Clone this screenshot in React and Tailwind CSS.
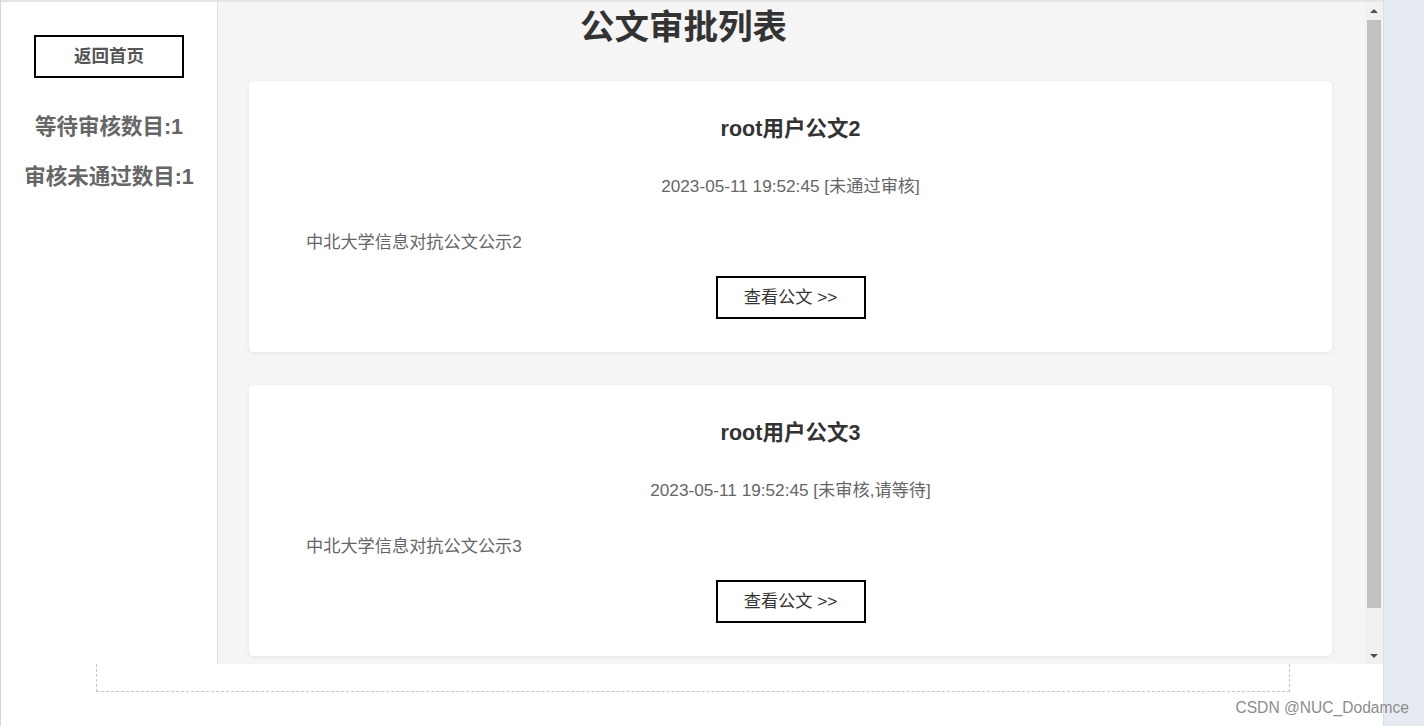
const font = { fontFamily: '"Liberation Sans", "Noto Sans CJK SC", Arial, sans-serif' };

const docs = [
  { title: 'root用户公文2', time: '2023-05-11 19:52:45', status: '[未通过审核]', desc: '中北大学信息对抗公文公示2' },
  { title: 'root用户公文3', time: '2023-05-11 19:52:45', status: '[未审核,请等待]', desc: '中北大学信息对抗公文公示3' },
];

function DocCard({ doc }) {
  return (
    <div className="w-[1083px] ml-[31px] bg-white rounded-[5px] shadow-[0_1px_4px_rgba(0,0,0,0.07)] flex flex-col items-center pt-[34px] pb-[33px]">
      <div className="text-[21.5px] leading-[28px] font-bold text-[#333]">{doc.title}</div>
      <div className="mt-[31px] text-[17.2px] leading-[24px] text-[#666]">
        {doc.time} {doc.status}
      </div>
      <div className="mt-[32px] self-start pl-[57px] text-[17.2px] leading-[24px] text-[#666]">{doc.desc}</div>
      <button className="mt-[22px] w-[150px] h-[43px] border-2 border-black bg-white text-[17.2px] text-[#333]">
        查看公文 &gt;&gt;
      </button>
    </div>
  );
}

export default function App() {
  return (
    <div style={font} className="relative w-[1424px] h-[726px] bg-white flex overflow-hidden">
      <div className="w-[1383px] h-full flex flex-col border-l border-[#d4d6da]">
        <div className="h-[664px] flex border-t-2 border-[#e4e4e4]">
          {/* sidebar */}
          <div className="w-[217px] shrink-0 bg-white border-r border-[#e2e2e2] flex flex-col items-center">
            <button className="mt-[33px] w-[150px] h-[43px] border-2 border-black bg-white text-[17.5px] font-bold text-[#555]">
              返回首页
            </button>
            <div className="mt-[35px] text-[21.5px] leading-[28px] font-bold text-[#666]">等待审核数目:1</div>
            <div className="mt-[22px] text-[21.5px] leading-[28px] font-bold text-[#666]">审核未通过数目:1</div>
          </div>

          {/* main */}
          <div className="flex-1 bg-[#f5f5f5] overflow-hidden">
            <div className="flex flex-col">
              <h1 className="mt-[5px] h-[40px] pl-[362px] text-[34.5px] leading-[40px] font-bold text-[#333]">公文审批列表</h1>
              <div className="mt-[34px] flex flex-col gap-[33px]">
                {docs.map((d) => (
                  <DocCard key={d.title} doc={d} />
                ))}
              </div>
            </div>
          </div>

          {/* scrollbar */}
          <div className="w-[18px] shrink-0 bg-[#f1f1f1] flex flex-col items-center">
            <div className="h-[18px] flex items-center justify-center">
              <div className="w-0 h-0 border-x-[4px] border-x-transparent border-b-[4px] border-b-[#505050]" />
            </div>
            <div className="w-[14px] h-[588px] bg-[#c1c1c1]" />
            <div className="flex-1 flex items-end justify-center pb-[6px]">
              <div className="w-0 h-0 border-x-[4px] border-x-transparent border-t-[4px] border-t-[#505050]" />
            </div>
          </div>
        </div>

        {/* below frame */}
        <div className="flex-1 bg-white">
          <div className="ml-[95px] w-[1194px] h-[28px] border-x border-b border-dashed border-[#c4c4c4]" />
        </div>
      </div>

      <div className="flex-1 bg-[#e6eaf1] border-l border-[#dcdfe5]" />

      <div className="absolute right-[15px] bottom-[9px] text-[15.6px] leading-[18px] text-[#8c8c8c]">CSDN @NUC_Dodamce</div>
    </div>
  );
}
